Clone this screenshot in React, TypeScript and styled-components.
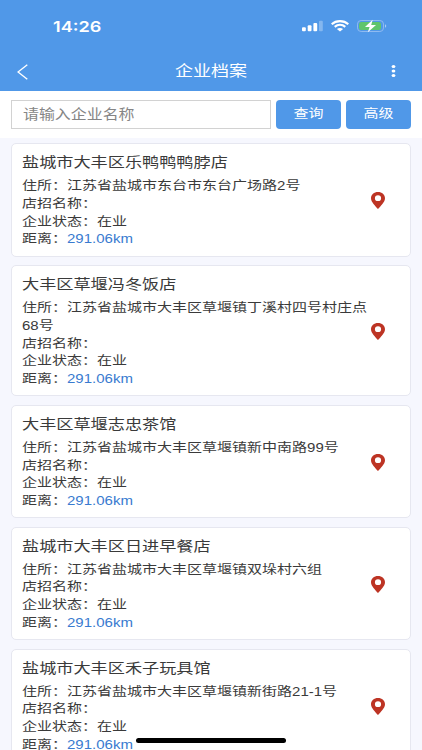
import React from "react";
import styled, { createGlobalStyle } from "styled-components";

const STRETCH = 1.217;

const GlobalStyle = createGlobalStyle`
  * { box-sizing: border-box; }
  html, body { margin: 0; height: 100%; overflow: hidden; }
  body {
    background: #f6f7fe;
    font-family: "Liberation Sans", "Noto Sans CJK SC", sans-serif;
    color: #3a3a3a;
  }
`;

const Screen = styled.main`
  position: relative;
  display: flex;
  flex-direction: column;
  width: 422px;
  height: 750px;
  overflow: hidden;
  background: #f6f7fe;
`;

const Header = styled.header`
  flex: none;
  height: 91px;
  background: #5098e8;
  color: #fff;
`;

const StatusBar = styled.div`
  display: flex;
  align-items: center;
  justify-content: space-between;
  height: 52px;
  padding: 0 35px 0 53px;
`;

const Clock = styled.span`
  padding-top: 2px;
  font: 600 15.2px/20px Inter, sans-serif;
  transform: scaleX(1.19);
  transform-origin: left center;
`;

const StatusIcons = styled.div`
  display: flex;
  align-items: center;
  gap: 8px;
  svg { display: block; }
`;

const NavBar = styled.nav`
  display: grid;
  grid-template-columns: 60px 1fr 60px;
  align-items: center;
  height: 38px;
`;

const NavButton = styled.button<{ $end?: boolean }>`
  display: flex;
  justify-content: ${(p) => (p.$end ? "flex-end" : "flex-start")};
  padding: ${(p) => (p.$end ? "0 26px 0 0" : "2px 0 0 17px")};
  border: 0;
  background: none;
  color: #fff;
`;

const NavTitle = styled.h1`
  margin: 0;
  font-size: 14.8px;
  font-weight: 400;
  line-height: 20px;
  text-align: center;
  transform: scaleX(${STRETCH});
`;

const SearchBar = styled.form`
  display: flex;
  flex: none;
  height: 47px;
  padding: 9px 11px 9px;
  background: #fff;
`;

const Field = styled.label`
  display: flex;
  align-items: center;
  width: 260px;
  height: 29px;
  margin-right: 5px;
  padding-left: 11px;
  border: 1px solid #d2d2d2;
  background: #fff;
`;

const SearchInput = styled.input`
  width: 190px;
  height: 24px;
  padding: 0;
  border: 0;
  outline: 0;
  background: none;
  font: 13.1px/24px "Liberation Sans", "Noto Sans CJK SC", sans-serif;
  transform: scaleX(${STRETCH});
  transform-origin: left center;
  &::placeholder { color: #858585; opacity: 1; }
`;

const Action = styled.button`
  width: 65px;
  height: 29px;
  padding: 0;
  border: 0;
  border-radius: 4px;
  background: #5098e8;
  color: #fff;
  font: 12.33px/29px "Liberation Sans", "Noto Sans CJK SC", sans-serif;
  & + & { margin-left: 5px; }
  span { display: block; transform: scaleX(${STRETCH}); }
`;

const List = styled.section`
  display: flex;
  flex-direction: column;
  gap: 8.8px;
  padding: 5.4px 11px;
`;

const Card = styled.article`
  display: flex;
  align-items: center;
  flex: none;
  padding: 8px 25px 6.5px 10px;
  border: 1px solid #e6e7f0;
  border-radius: 5px;
  background: #fff;
`;

const Details = styled.div`
  flex: none;
  width: 288px;
  margin-right: auto;
  transform: scaleX(${STRETCH});
  transform-origin: left center;
`;

const Name = styled.h2`
  margin: 0 0 5px;
  font-size: 14.1px;
  font-weight: 400;
  line-height: 21px;
`;

const Line = styled.p`
  margin: 0;
  font-size: 12.33px;
  line-height: 17.65px;
  word-break: break-all;
`;

const Distance = styled.span`
  color: #397bd0;
`;

const HomeIndicator = styled.div`
  position: absolute;
  left: 136px;
  top: 738px;
  width: 150px;
  height: 4.5px;
  border-radius: 3px;
  background: #000;
`;

const companies = [
  { name: "盐城市大丰区乐鸭鸭鸭脖店", address: "江苏省盐城市东台市东台广场路2号" },
  { name: "大丰区草堰冯冬饭店", address: "江苏省盐城市大丰区草堰镇丁溪村四号村庄点68号" },
  { name: "大丰区草堰志忠茶馆", address: "江苏省盐城市大丰区草堰镇新中南路99号" },
  { name: "盐城市大丰区日进早餐店", address: "江苏省盐城市大丰区草堰镇双垛村六组" },
  { name: "盐城市大丰区禾子玩具馆", address: "江苏省盐城市大丰区草堰镇新街路21-1号" },
];

const Signal = () => (
  <svg width="21" height="12" viewBox="0 0 21 12" fill="#fff">
    <rect x="0" y="7.3" width="3.8" height="4" rx="1" />
    <rect x="5.7" y="5.2" width="3.8" height="6.1" rx="1" />
    <rect x="11.4" y="3" width="3.8" height="8.3" rx="1" />
    <rect x="17" y="0.8" width="3.8" height="10.5" rx="1" opacity=".3" />
  </svg>
);

const Wifi = () => (
  <svg width="18" height="12" viewBox="0 0 18 12" fill="none" stroke="#fff" strokeWidth="2.1">
    <path d="M.7 4.2C5.2.1 12.8.1 17.3 4.2" />
    <path d="M3.7 6.9C6.8 4.2 11.2 4.2 14.3 6.9" />
    <path d="M9 11.5 5.9 9C7.7 7.5 10.3 7.5 12.1 9Z" fill="#fff" stroke="none" />
  </svg>
);

const Battery = () => (
  <svg width="30" height="14" viewBox="0 0 30 14">
    <rect x=".5" y="1.5" width="26" height="11" rx="3.6" fill="none" stroke="#8fbaf0" />
    <rect x="2" y="3" width="22" height="8" rx="2.3" fill="#60c56c" />
    <path d="M28 5.3c1.7.6 1.7 2.8 0 3.4Z" fill="#a9cbf3" />
    <path d="M15.700.8 8 7.900h4.600L10.800 13.200l8.200-7.100h-4.800Z" fill="#fff" />
  </svg>
);

const Pin = () => (
  <svg width="14" height="17" viewBox="0 0 14 17">
    <path
      fill="#bd3424"
      fillRule="evenodd"
      d="M7 0C3 0 0 2.7 0 6.2 0 10.1 4.5 14 7 17c2.5-3 7-6.9 7-10.8C14 2.7 11 0 7 0Zm0 3.3a3.1 2.9 0 1 1 0 5.8 3.1 2.9 0 0 1 0-5.8Z"
    />
  </svg>
);

export default function App() {
  return (
    <>
      <GlobalStyle />
      <Screen>
        <Header>
          <StatusBar>
            <Clock>14:26</Clock>
            <StatusIcons>
              <Signal />
              <Wifi />
              <Battery />
            </StatusIcons>
          </StatusBar>
          <NavBar>
            <NavButton aria-label="返回">
              <svg width="11" height="16" viewBox="0 0 11 16" fill="none" stroke="currentColor" strokeWidth="1.4">
                <path d="M10.3.8 1 8l9.3 7.2" />
              </svg>
            </NavButton>
            <NavTitle>企业档案</NavTitle>
            <NavButton $end aria-label="更多">
              <svg width="5" height="12" viewBox="0 0 5 12" fill="currentColor">
                <ellipse cx="2.5" cy="1.6" rx="1.9" ry="1.5" />
                <ellipse cx="2.5" cy="6" rx="1.9" ry="1.5" />
                <ellipse cx="2.5" cy="10.4" rx="1.9" ry="1.5" />
              </svg>
            </NavButton>
          </NavBar>
        </Header>
        <SearchBar>
          <Field>
            <SearchInput placeholder="请输入企业名称" />
          </Field>
          <Action type="button"><span>查询</span></Action>
          <Action type="button"><span>高级</span></Action>
        </SearchBar>
        <List>
          {companies.map((c) => (
            <Card key={c.name}>
              <Details>
                <Name>{c.name}</Name>
                <Line>住所：{c.address}</Line>
                <Line>店招名称：</Line>
                <Line>企业状态：在业</Line>
                <Line>距离：<Distance>291.06km</Distance></Line>
              </Details>
              <Pin />
            </Card>
          ))}
        </List>
        <HomeIndicator />
      </Screen>
    </>
  );
}
